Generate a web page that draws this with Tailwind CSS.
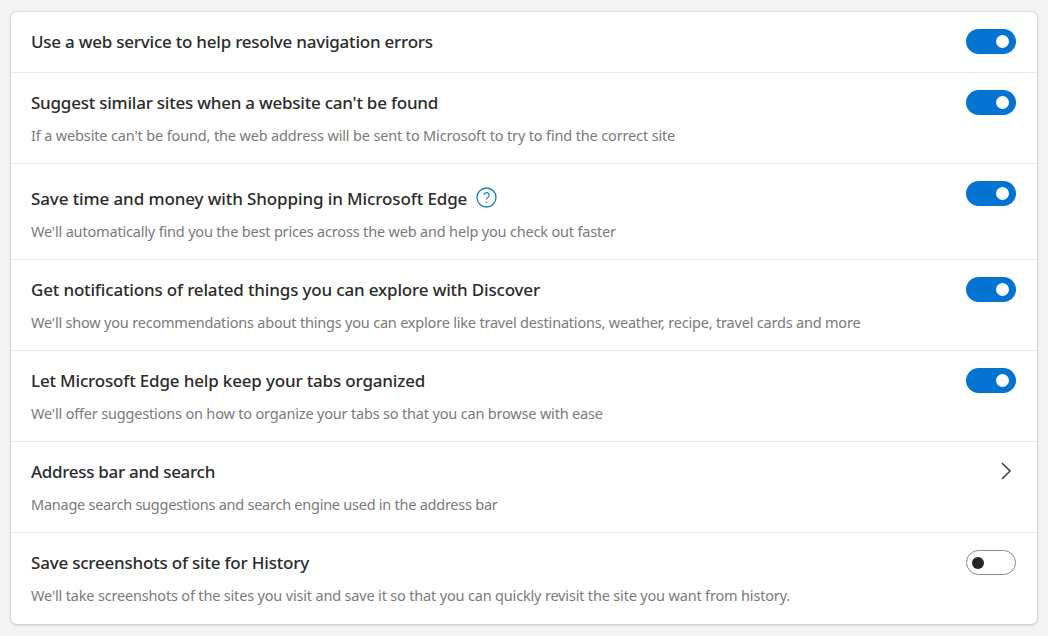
<!DOCTYPE html>
<html>
<head>
<meta charset="utf-8">
<script src="https://cdn.jsdelivr.net/npm/@tailwindcss/browser@4"></script>
</head>
<body class="m-0 bg-[#f5f5f5] font-['Noto_Sans',sans-serif]">
<div class="w-[1048px] h-[636px] pt-[12px] px-[11px] overflow-hidden">
  <div class="w-[1026px] h-[612px] bg-white rounded-[6px] shadow-[0_0_3px_rgba(0,0,0,0.22),0_1px_3px_rgba(0,0,0,0.12)] flex flex-col">

    <div class="h-[61px] shrink-0 flex items-start justify-between pl-[20px] pr-[21px] border-b border-[#e9e9e9]">
      <div class="pt-[16px] text-[17px] tracking-[-0.23px] leading-[28px] font-medium text-[#2b2b2b]">Use a web service to help resolve navigation errors</div>
      <div class="mt-[17px] w-[50px] h-[25px] rounded-full bg-[#0573d2] flex items-center justify-end pr-[7px]"><span class="block w-[13px] h-[13px] rounded-full bg-white"></span></div>
    </div>

    <div class="h-[91px] shrink-0 flex items-start justify-between pl-[20px] pr-[21px] border-b border-[#e9e9e9]">
      <div>
        <div class="pt-[16px] text-[17px] tracking-[-0.23px] leading-[28px] font-medium text-[#2b2b2b]">Suggest similar sites when a website can't be found</div>
        <div class="pt-[7px] text-[14.5px] tracking-[-0.15px] leading-[22px] text-[#7a7a7a]">If a website can't be found, the web address will be sent to Microsoft to try to find the correct site</div>
      </div>
      <div class="mt-[17px] w-[50px] h-[25px] rounded-full bg-[#0573d2] flex items-center justify-end pr-[7px]"><span class="block w-[13px] h-[13px] rounded-full bg-white"></span></div>
    </div>

    <div class="h-[96px] shrink-0 flex items-start justify-between pl-[20px] pr-[21px] border-b border-[#e9e9e9]">
      <div>
        <div class="pt-[21px] flex items-center gap-[9px] text-[17px] tracking-[-0.11px] leading-[28px] font-medium text-[#2b2b2b]">
          <span>Save time and money with Shopping in Microsoft Edge</span>
          <svg class="w-[21px] h-[21px] -mt-[3px]" viewBox="0 0 21 21" fill="none"><circle cx="10.5" cy="10.5" r="9.5" stroke="#1d7fc0" stroke-width="1.3"/><path d="M7.9 8.1a2.6 2.6 0 1 1 4.1 2.2c-.9.6-1.5 1.1-1.5 2.3" stroke="#1d7fc0" stroke-width="1.2" fill="none"/><circle cx="10.5" cy="15.2" r=".8" fill="#1d7fc0"/></svg>
        </div>
        <div class="pt-[7px] text-[14.5px] tracking-[-0.18px] leading-[22px] text-[#7a7a7a]">We'll automatically find you the best prices across the web and help you check out faster</div>
      </div>
      <div class="mt-[17px] w-[50px] h-[25px] rounded-full bg-[#0573d2] flex items-center justify-end pr-[7px]"><span class="block w-[13px] h-[13px] rounded-full bg-white"></span></div>
    </div>

    <div class="h-[91px] shrink-0 flex items-start justify-between pl-[20px] pr-[21px] border-b border-[#e9e9e9]">
      <div>
        <div class="pt-[16px] text-[17px] tracking-[-0.165px] leading-[28px] font-medium text-[#2b2b2b]">Get notifications of related things you can explore with Discover</div>
        <div class="pt-[7px] text-[14.5px] tracking-[-0.2px] leading-[22px] text-[#7a7a7a]">We'll show you recommendations about things you can explore like travel destinations, weather, recipe, travel cards and more</div>
      </div>
      <div class="mt-[17px] w-[50px] h-[25px] rounded-full bg-[#0573d2] flex items-center justify-end pr-[7px]"><span class="block w-[13px] h-[13px] rounded-full bg-white"></span></div>
    </div>

    <div class="h-[91px] shrink-0 flex items-start justify-between pl-[20px] pr-[21px] border-b border-[#e9e9e9]">
      <div>
        <div class="pt-[16px] text-[17px] tracking-[-0.17px] leading-[28px] font-medium text-[#2b2b2b]">Let Microsoft Edge help keep your tabs organized</div>
        <div class="pt-[7px] text-[14.5px] tracking-[-0.18px] leading-[22px] text-[#7a7a7a]">We'll offer suggestions on how to organize your tabs so that you can browse with ease</div>
      </div>
      <div class="mt-[17px] w-[50px] h-[25px] rounded-full bg-[#0573d2] flex items-center justify-end pr-[7px]"><span class="block w-[13px] h-[13px] rounded-full bg-white"></span></div>
    </div>

    <div class="h-[91px] shrink-0 flex items-start justify-between pl-[20px] pr-[21px] border-b border-[#e9e9e9]">
      <div>
        <div class="pt-[16px] text-[17px] tracking-[-0.3px] leading-[28px] font-medium text-[#2b2b2b]">Address bar and search</div>
        <div class="pt-[7px] text-[14.5px] tracking-[-0.25px] leading-[22px] text-[#7a7a7a]">Manage search suggestions and search engine used in the address bar</div>
      </div>
      <svg class="mt-[20px] mr-[4px] w-[12px] h-[18px]" viewBox="0 0 12 18" fill="none"><path d="M2 1 L10 9 L2 17" stroke="#3a3a3a" stroke-width="1.5"/></svg>
    </div>

    <div class="flex-1 flex items-start justify-between pl-[20px] pr-[21px]">
      <div>
        <div class="pt-[16px] text-[17px] tracking-[-0.21px] leading-[28px] font-medium text-[#2b2b2b]">Save screenshots of site for History</div>
        <div class="pt-[7px] text-[14.5px] tracking-[-0.175px] leading-[22px] text-[#7a7a7a]">We'll take screenshots of the sites you visit and save it so that you can quickly revisit the site you want from history.</div>
      </div>
      <div class="mt-[17px] w-[50px] h-[25px] rounded-full bg-white border border-[#8a8a8a] flex items-center pl-[5px]"><span class="block w-[12px] h-[12px] rounded-full bg-[#262626]"></span></div>
    </div>

  </div>
</div>
</body>
</html>
